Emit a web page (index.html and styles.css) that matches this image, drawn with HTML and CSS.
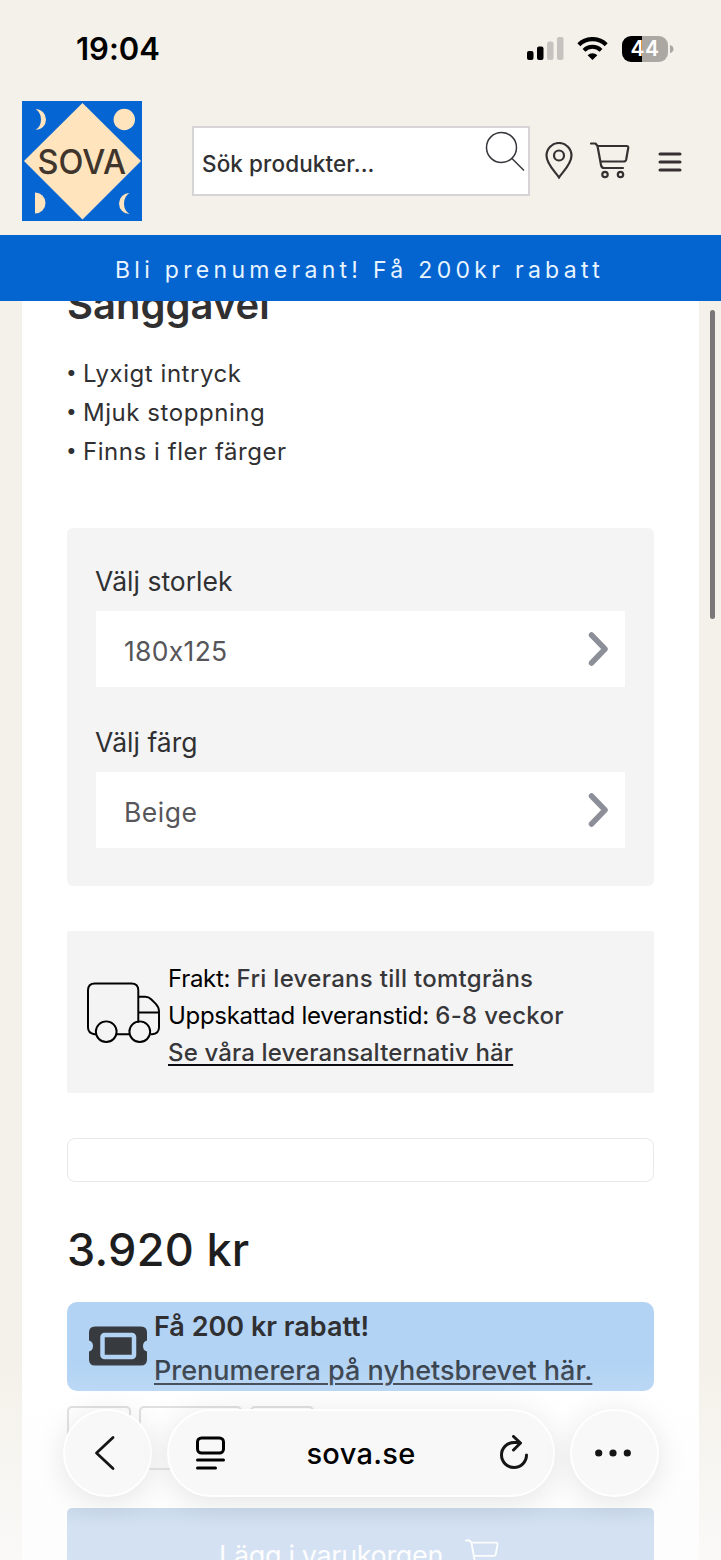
FILE: index.html
```html
<!DOCTYPE html>
<html lang="sv">
	<head>
		<title>SOVA</title>
		<meta charset="utf-8"/>
		<meta name="viewport" content="width=device-width, initial-scale=1">
		<link rel="stylesheet" href="styles.css">
	</head>
	<body>
		<div class="statusbar">
			<span class="time">19:04</span>
			<svg class="signal" width="37" height="23" viewBox="0 0 37 23">
				<rect x="0" y="14" width="6.5" height="9" rx="2"/>
				<rect x="10" y="9.500" width="6.500" height="13.500" rx="2"/>
				<rect x="20" y="4.500" width="6.500" height="18.500" rx="2" fill="#c5c3bf"/>
				<rect x="30" y="0" width="6.500" height="23" rx="2" fill="#c5c3bf"/>
			</svg>
			<svg class="wifi" width="31" height="23" viewBox="0 0 31 23">
				<path d="M1.800 7.700a19.500 19.500 0 0 1 27.400 0" fill="none" stroke="#000" stroke-width="4.200"/>
				<path d="M7 13.300a12 12 0 0 1 17 0" fill="none" stroke="#000" stroke-width="4"/>
				<path d="M15.500 23l-4.900-4.800a7 7 0 0 1 9.800 0z"/>
			</svg>
			<div class="battery">44</div>
			<svg class="tip" width="4" height="8" viewBox="0 0 4 8"><path d="M0 0q3.500 1 3.500 4t-3.500 4z" fill="#aba8a4"/></svg>
		</div>
		<header class="header">
			<svg class="logo" width="120" height="120" viewBox="0 0 120 120">
				<rect width="120" height="120" fill="#0565d2"/>
				<path d="M60.500 2L119 60 60.500 118.500 2 60z" fill="#ffe4bd"/>
				<g fill="#ffe4bd">
					<circle cx="102.300" cy="18.500" r="10.700"/>
					<path d="M13.500 8a10.500 10.500 0 0 1 0 21q5.500-3.500 5.500-10.500t-5.500-10.500z"/>
					<path d="M13 91.500a10.500 10.500 0 0 1 0 21z"/>
					<path d="M107.500 92a10.500 10.500 0 0 0 0 21q-5.500-3.500-5.500-10.500t5.500-10.500z"/>
				</g>
				<text x="15.500" y="72.500" textLength="88.500" lengthAdjust="spacingAndGlyphs" class="logotext">SOVA</text>
			</svg>
			<div class="search">
				<span>Sök produkter...</span>
				<svg width="40" height="41" viewBox="0 0 40 41" fill="none" stroke="#37373d" stroke-width="1.500">
					<circle cx="16.500" cy="16.500" r="15"/>
					<path d="M27 27.500l12 12"/>
				</svg>
			</div>
			<svg class="pin" width="28" height="37" viewBox="0 0 28 37" fill="none" stroke="#363032" stroke-width="2.200">
				<path d="M14 35.500C11 30.500 1.500 22.500 1.500 13.500a12.500 12.500 0 0 1 25 0c0 9-9.500 17-12.500 22z"/>
				<circle cx="14" cy="13.500" r="5"/>
			</svg>
			<svg class="cart" width="40" height="37" viewBox="0 0 40 37" fill="none" stroke="#363032" stroke-width="2.200" stroke-linecap="round" stroke-linejoin="round">
				<path d="M1 1.500h4.500l2 2.500 3.500 19q.6 3 3 3h19M7.500 4h29q2 0 1.700 2l-2 11.500q-.5 2-2.500 2H10.500"/>
				<circle cx="15" cy="32.500" r="2.700"/>
				<circle cx="30.500" cy="32.500" r="2.700"/>
			</svg>
			<svg class="menu" width="24" height="22" viewBox="0 0 24 22" stroke="#363032" stroke-width="3" stroke-linecap="round">
				<path d="M2 3h20M2 11h20M2 19h20"/>
			</svg>
		</header>
		<div class="promo">Bli prenumerant! Få 200kr rabatt</div>
		<main class="product">
			<h1>Sänggavel</h1>
			<ul class="points">
				<li><i>•</i>Lyxigt intryck</li>
				<li><i>•</i>Mjuk stoppning</li>
				<li><i>•</i>Finns i fler färger</li>
			</ul>
			<div class="options">
				<label>Välj storlek</label>
				<div class="select">
					<span class="size">180x125</span>
					<svg width="21" height="34" viewBox="0 0 21 34"><path d="M3.500 3l13.500 14-13.500 14"/></svg>
				</div>
				<label>Välj färg</label>
				<div class="select">
					<span class="color">Beige</span>
					<svg width="21" height="34" viewBox="0 0 21 34"><path d="M3.500 3l13.500 14-13.500 14"/></svg>
				</div>
			</div>
			<div class="delivery">
				<svg width="73" height="62" viewBox="0 0 74 62" fill="none" stroke="#000" stroke-width="2">
					<path d="M9 52.500H7.500q-6.500-1-6.500-7V8q0-7 7-7h37q7 0 7 7v33M29 52.500h14M52 14.500h7q3.500 0 6 2.500l4.500 4.500q3.500 3.500 3.500 8v16q0 6.500-7 7h-1.500M52 30.500h21"/>
					<circle cx="19.500" cy="50" r="10.500"/>
					<circle cx="53.500" cy="50" r="10.500"/>
				</svg>
				<div>
					<div><span>Frakt: </span><b>Fri leverans till tomtgräns</b></div>
					<div><span>Uppskattad leveranstid: </span><b>6-8 veckor</b></div>
					<a>Se våra leveransalternativ här</a>
				</div>
			</div>
			<div class="empty"></div>
			<div class="price">3.920 kr</div>
			<div class="coupon">
				<svg width="58" height="40" viewBox="0 0 58 40">
					<path d="M6 .5h46q6 0 6 6v8q-4 1-4 5.500t4 5.500v8q0 6-6 6H6q-6 0-6-6v-8q4-1 4-5.500T0 14.500v-8q0-6 6-6z" fill="#373b40"/>
					<rect x="13.500" y="9" width="31.500" height="22" rx="2" fill="none" stroke="#b3d3f4" stroke-width="4.500"/>
				</svg>
				<div>
					<div>Få 200 kr rabatt!</div>
					<a>Prenumerera på nyhetsbrevet här.</a>
				</div>
			</div>
			<div class="amount">
				<div class="box"></div>
				<div class="box wide"></div>
				<div class="box"></div>
			</div>
			<div class="buy">
				<span>Lägg i varukorgen</span>
				<svg width="34" height="32" viewBox="0 0 40 37" fill="none" stroke="#fff" stroke-width="2.200" stroke-linecap="round" stroke-linejoin="round">
					<path d="M1 1.500h4.500l2 2.500 3.500 19q.6 3 3 3h19M7.500 4h29q2 0 1.700 2l-2 11.500q-.5 2-2.500 2H10.500"/>
					<circle cx="15" cy="32.500" r="2.700"/>
					<circle cx="30.500" cy="32.500" r="2.700"/>
				</svg>
			</div>
		</main>
		<div class="scrollbar"></div>
		<div class="fade"></div>
		<nav class="browser">
			<div class="round back">
				<svg width="22" height="36" viewBox="0 0 22 36" fill="none" stroke="#151515" stroke-width="2.800" stroke-linecap="round" stroke-linejoin="round"><path d="M19 2.500L2.500 18 19 33.500"/></svg>
			</div>
			<div class="address">
				<svg width="30" height="34" viewBox="0 0 30 34" fill="none" stroke="#000" stroke-width="3" stroke-linecap="round">
					<rect x="1.500" y="2" width="26" height="15" rx="4"/>
					<path d="M1.500 24h26M1.500 32h18"/>
				</svg>
				<span>sova.se</span>
				<svg width="30" height="36" viewBox="0 0 30 36" fill="none" stroke="#151515" stroke-width="3" stroke-linecap="round" stroke-linejoin="round">
					<path d="M27.500 20a12.500 12.500 0 1 1-12.500-12.500h5.500M14.500 1.500l7 6.500-7 7"/>
				</svg>
			</div>
			<div class="round more">
				<svg width="36" height="8" viewBox="0 0 36 8" fill="#151515"><circle cx="3.700" cy="4" r="3.600"/><circle cx="18" cy="4" r="3.600"/><circle cx="32.300" cy="4" r="3.600"/></svg>
			</div>
		</nav>
	</body>
</html>
```

FILE: styles.css
```css
* {
	box-sizing: border-box;
}

body {
	margin: 0;
	width: 721px;
	height: 1560px;
	overflow: hidden;
	position: relative;
	background-color: #f4f1ea;
	font-family: Inter, "Liberation Sans", sans-serif;
	font-feature-settings: "calt" 0;
	color: #303032;
}

svg {
	display: block;
	flex: none;
}

span, b, a {
	white-space: pre;
}

.statusbar {
	display: flex;
	align-items: center;
	height: 97px;
	padding-left: 76px;
}

.time {
	width: 451px;
	font-size: 31px;
	font-weight: 600;
	color: #000;
}

.signal {
	margin-right: 13px;
}

.wifi {
	margin-right: 14px;
}

.battery {
	width: 46px;
	height: 26px;
	border-radius: 9px;
	background: linear-gradient(to right, #000 20px, #aba8a4 20px);
	color: #fff;
	font-size: 21px;
	font-weight: 600;
	line-height: 26px;
	letter-spacing: 0.5px;
	text-align: center;
}

.tip {
	margin-left: 2px;
}

.header {
	display: flex;
	align-items: flex-start;
	height: 138px;
	padding: 4px 0 0 22px;
}

.logotext {
	font-size: 34px;
	font-weight: 500;
	fill: #40352c;
}

.search {
	display: flex;
	justify-content: space-between;
	width: 338px;
	height: 70px;
	margin: 25px 0 0 50px;
	padding: 3px 3px 0 8px;
	border: 2px solid #d6d4d6;
	background-color: #fff;
	font-size: 22.5px;
	font-weight: 500;
	line-height: 66px;
	letter-spacing: 0.1px;
}

.pin {
	margin: 41px 0 0 15px;
}

.cart {
	margin: 41px 0 0 17px;
}

.menu {
	margin: 50px 0 0 28px;
}

.promo {
	height: 66px;
	padding-left: 115px;
	background-color: #0464d0;
	color: #e8f4ff;
	font-size: 23px;
	line-height: 70px;
	letter-spacing: 4.3px;
	white-space: pre;
}

.product {
	width: 677px;
	height: 1259px;
	margin-left: 22px;
	padding: 0 45px;
	overflow: hidden;
	background-color: #fff;
}

h1 {
	margin: -20px 0 0;
	font-size: 40px;
	font-weight: 600;
	line-height: 48px;
}

.points {
	margin: 25px 0 57px -1px;
	padding: 0;
	list-style: none;
	font-size: 24px;
	line-height: 39px;
	letter-spacing: 0.55px;
}

.points li {
	display: flex;
}

.points i {
	width: 17px;
	font-style: normal;
	font-size: 19px;
	line-height: 37px;
}

.options {
	height: 358px;
	padding: 36px 29px 0;
	border-radius: 6px;
	background-color: #f4f4f5;
	font-size: 26.5px;
}

.options label {
	display: block;
	margin-left: -1px;
	line-height: 34px;
}

.select {
	display: flex;
	align-items: center;
	justify-content: space-between;
	height: 76px;
	margin: 13px 0 38px;
	padding: 0 16px 0 28px;
	background-color: #fff;
	color: #56565a;
}

.select span {
	padding-top: 4px;
}

.select .size {
	letter-spacing: 0.3px;
}

.select .color {
	letter-spacing: 0.5px;
}

.select path {
	fill: none;
	stroke: #8c8f97;
	stroke-width: 5.5;
	stroke-linecap: round;
	stroke-linejoin: round;
}

.delivery {
	display: flex;
	height: 162px;
	margin-top: 45px;
	padding: 28.6px 0 0 20px;
	border-radius: 3px;
	background-color: #f4f4f4;
	font-size: 24px;
	line-height: 37px;
	color: #000;
}

.delivery svg {
	margin: 22px 8px 0 0;
}

.delivery span {
	letter-spacing: -0.3px;
}

.delivery b, .delivery a {
	font-weight: 500;
	letter-spacing: 0.3px;
	color: #37373a;
}

.delivery a {
	letter-spacing: 0.13px;
	text-decoration: underline;
	text-decoration-color: #0b0b14;
	text-decoration-thickness: 2px;
	text-underline-offset: 3px;
}

.empty {
	height: 44px;
	margin-top: 45px;
	border: 1.5px solid #e8e8e8;
	border-radius: 8px;
}

.price {
	margin: 40px 0 24px;
	font-size: 45px;
	font-weight: 500;
	line-height: 56px;
	letter-spacing: 0.3px;
	color: #1e1e20;
}

.coupon {
	display: flex;
	height: 89px;
	padding: 3px 0 0 22px;
	border-radius: 10px;
	background-color: #b2d3f4;
	font-size: 27px;
	font-weight: 600;
	line-height: 44px;
}

.coupon svg {
	margin: 21px 7px 0 0;
}

.coupon a {
	font-weight: 500;
	color: #36404b;
	text-decoration: underline;
	text-decoration-thickness: 2px;
	text-underline-offset: 3px;
}

.amount {
	display: flex;
	gap: 8px;
	margin-top: 15px;
}

.box {
	width: 64px;
	height: 64px;
	border: 2px solid #dadada;
	border-radius: 5px;
}

.wide {
	width: 103px;
}

.buy {
	display: flex;
	height: 90px;
	margin-top: 38px;
	padding: 31px 0 0 152px;
	border-radius: 5px;
	background: linear-gradient(#8baed4, #8cb2e2 22px, #6094d8 52px);
	color: #fff;
	font-size: 27px;
	line-height: 34px;
	letter-spacing: -0.35px;
}

.buy svg {
	margin-left: 22px;
}

.scrollbar {
	position: absolute;
	top: 310px;
	left: 710px;
	width: 5px;
	height: 309px;
	border-radius: 3px;
	background-color: #7b7677;
}

/* page content fades out under the browser bar */
.fade {
	position: absolute;
	left: 0;
	right: 0;
	bottom: 0;
	height: 200px;
	background: linear-gradient(rgba(252,252,252,0), rgba(252,252,252,0.5) 65%, rgba(252,252,252,0.75));
}

.browser {
	position: absolute;
	left: 63px;
	top: 1409px;
	display: flex;
	gap: 15px;
}

.round, .address {
	display: flex;
	align-items: center;
	justify-content: center;
	height: 88px;
	border: 2px solid #fff;
	border-radius: 44px;
	background-color: #f8f8f8;
	box-shadow: 0 5px 30px rgba(0,0,0,0.1);
}

.round {
	width: 89px;
}

.back {
	padding-right: 6px;
}

.more {
	padding-right: 4px;
}

.address {
	justify-content: space-between;
	width: 388px;
	padding: 0 24px 0 27px;
	font-size: 29px;
	font-weight: 500;
	letter-spacing: 0.3px;
	color: #000;
}

.address span {
	padding-right: 3px;
}
```
